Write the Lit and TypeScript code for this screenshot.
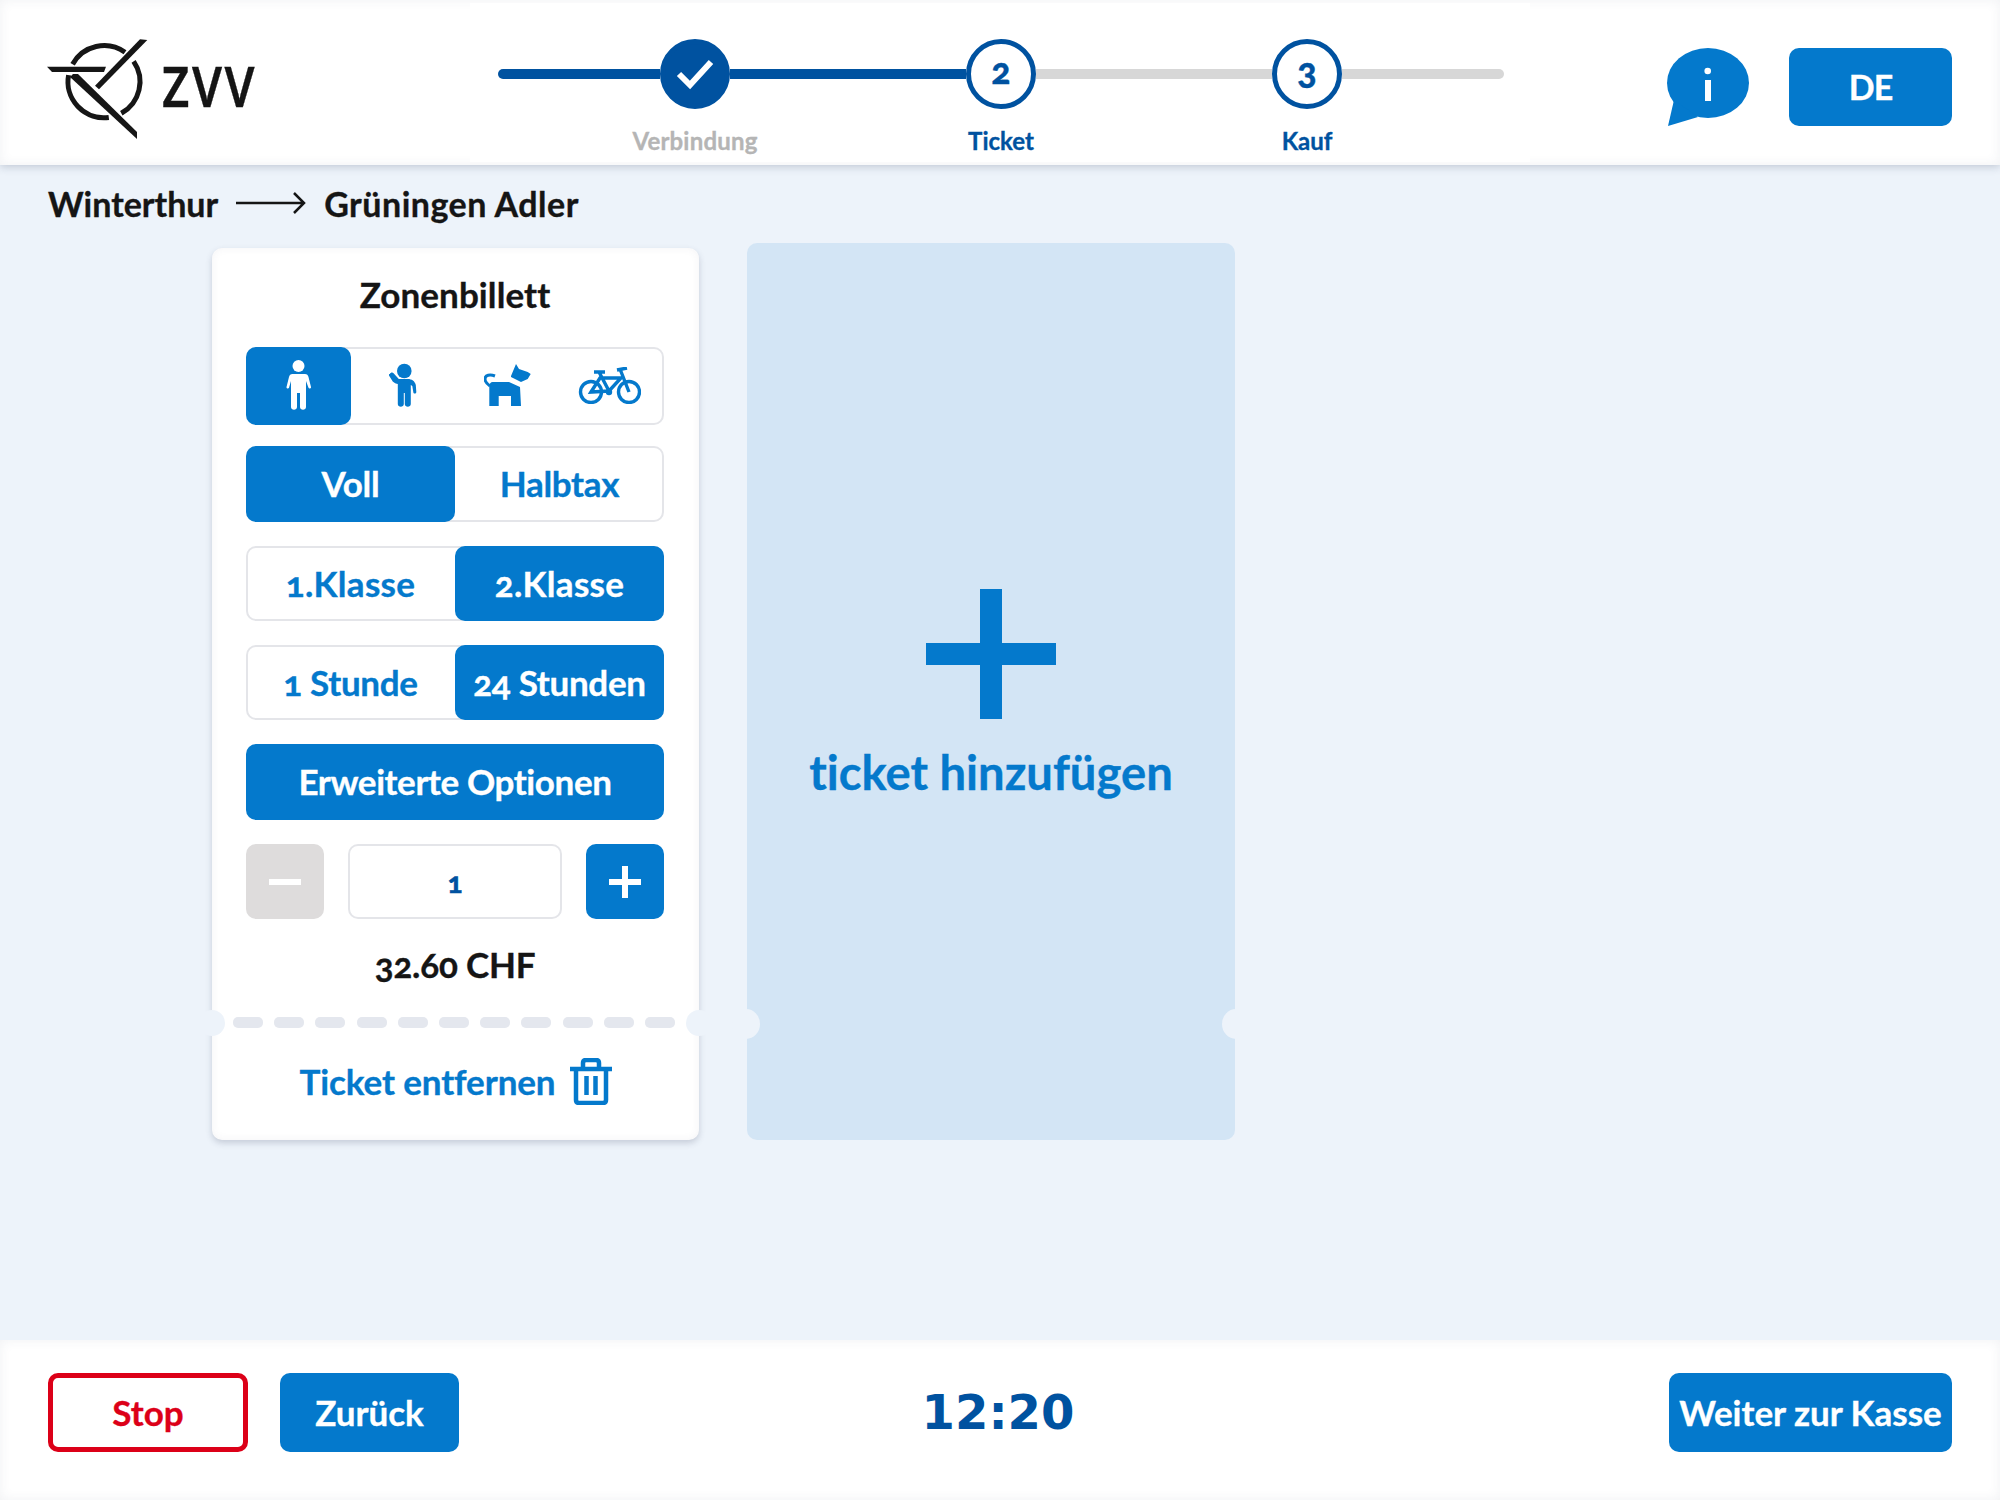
import { LitElement, css, html, svg } from 'lit';
import { customElement } from 'lit/decorators.js';

const personIcon = svg`<circle cx="12.500" cy="6" r="6"/><path d="M6 14h13c2 0 3 1 3.500 3l2.500 10c.3 1.400-1.900 2.200-2.500.8L20 21v26c0 3.500-6 3.500-6 0V33h-3v14c0 3.500-6 3.500-6 0V21l-2 6.800c-.6 1.400-2.800.6-2.500-.8l2.500-10c.5-2 1.500-3 3.500-3z"/>`;
const childIcon = svg`<circle cx="15.300" cy="8" r="7.300"/><path d="M.8 11c1-2 3-2 4-.5l5 5.500h9c4 0 7 2 8 6l.5 7c0 2-3 2-3 0l-1-6-1.500-1v19c0 3.500-6 3.500-6 0V30h-1v11c0 3.500-6 3.500-6 0V21c-3-.5-5-2-6-4l-2.500-4c-.5-.7-.5-1.300 0-2z"/>`;
const dogIcon = svg`<path d="M27 12L32 0l3 5 8.700 3 3 2-3 5-6.700 3-10-5z"/><path d="M8.700 18H25l11 5 1 19H27V32H14.700v10H5.300V22c0-2 1.400-4 3.400-4z"/><path d="M11 12C6 10 1 11 1 15c0 3 2 5 5 7" fill="none" stroke="currentColor" stroke-width="3"/>`;
const bikeIcon = svg`<g fill="none" stroke="currentColor" stroke-width="3.400"><circle cx="13" cy="25" r="10.500"/><circle cx="51" cy="25" r="10.500"/><path d="M13 25L22 11h21L31 24zM21 5l10 19M16 5h11M42 2l9 23M39 3l10-2"/></g><circle cx="31" cy="25" r="3.200"/>`;

const logoIcon = html`<svg class="logo-mark" viewBox="44 38 105 105" aria-hidden="true">
  <g fill="none" stroke="#161616" stroke-width="5">
    <path d="M72.600 64.200A36 36 0 0 1 125 52.200"/>
    <path d="M133.600 61.300A36 36 0 0 1 121.300 113.300"/>
    <path d="M108.800 117.400A36 36 0 0 1 68.600 75.100"/>
  </g>
  <g fill="#161616">
    <path d="M47 66.700h59l-2 5.300H52z"/>
    <path d="M140 39.300l7.300.7L99 89.300l-4-3.600z"/>
    <path d="M73 74h5l59 58v7L70 77z"/>
  </g>
</svg>`;

@customElement('app-root')
export class AppRoot extends LitElement {
  static override styles = css`
    :host {
      display: block;
      width: 2000px;
      height: 1500px;
      font-family: 'Lato', 'Noto Sans', sans-serif;
      font-weight: 700;
      font-feature-settings: 'onum';
      font-variant-ligatures: none;
      -webkit-text-stroke: 0.35px currentColor;
      color: #151515;
      background: #edf3fa;
    }

    .page {
      display: grid;
      grid-template-rows: 165px 1fr 160px;
      width: 2000px;
      height: 1500px;
    }

    /* header */
    .header {
      display: grid;
      grid-template-columns: 470px 1060px 470px;
      background: #fff;
      box-shadow: 0 2px 8px rgba(60, 70, 100, 0.24), inset 0 0 12px rgba(60, 70, 100, 0.07);
      z-index: 1;
    }

    .brand {
      display: flex;
      align-items: flex-start;
      padding: 38px 0 0 44px;
    }

    .logo-mark {
      width: 105px;
      height: 105px;
      flex: none;
    }

    .brand-name {
      margin: 16px 0 0 13px;
      font-family: 'Noto Sans', sans-serif;
      font-kerning: none;
      font-weight: 600;
      font-size: 56px;
      line-height: 62px;
      letter-spacing: 3px;
      transform: scaleX(0.85);
      transform-origin: left center;
    }

    .stepper {
      display: flex;
      align-items: flex-start;
      box-sizing: border-box;
      margin-top: 3px;
      height: 159px;
      padding: 36px 0 0 28px;
      background: #fff;
    }

    .bar {
      height: 10px;
      margin-top: 30px;
      background: #d7d7d7;
    }

    .bar.done {
      background: #0052a0;
    }

    .bar.start {
      border-radius: 5px 0 0 5px;
    }

    .bar.end {
      border-radius: 0 5px 5px 0;
    }

    .step {
      display: flex;
      flex-direction: column;
      align-items: center;
      width: 70px;
      flex: none;
    }

    .dot {
      display: flex;
      align-items: center;
      justify-content: center;
      box-sizing: border-box;
      width: 70px;
      height: 70px;
      padding-bottom: 9px;
      border: 5px solid #0052a0;
      border-radius: 50%;
      background: #fff;
      color: #0052a0;
      font-size: 36px;
      font-weight: 900;
    }

    .dot.done {
      padding-bottom: 0;
      background: #0052a0;
    }

    .dot svg {
      width: 42px;
      height: 34px;
    }

    .step-label {
      margin-top: 18px;
      font-size: 24px;
      line-height: 28px;
      white-space: nowrap;
      color: #0052a0;
    }

    .step-label.past {
      color: #b5b5b5;
      letter-spacing: 0.2px;
    }

    .tools {
      display: flex;
      align-items: flex-start;
      justify-content: flex-end;
      gap: 40px;
      padding: 48px 48px 0 0;
    }

    .bubble {
      width: 82px;
      height: 78px;
    }

    button {
      font: inherit;
      font-feature-settings: inherit;
      font-variant-ligatures: none;
      border: 0;
      padding: 0 0 2px;
      margin: 0;
      background: #0479cc;
      color: #fff;
      border-radius: 10px;
    }

    .lang {
      width: 163px;
      height: 78px;
      font-size: 34px;
      letter-spacing: -1px;
    }

    /* main */
    .route {
      display: flex;
      align-items: center;
      gap: 17px;
      height: 76px;
      padding-left: 48px;
      font-size: 34px;
    }

    .route .to {
      letter-spacing: 0.5px;
    }

    .route svg {
      width: 72px;
      height: 24px;
    }

    .tickets {
      display: flex;
      align-items: flex-start;
      gap: 48px;
      padding: 2px 0 0 212px;
    }

    .card {
      position: relative;
      width: 487px;
      margin-top: 5px;
      border-radius: 10px;
      background: #fff;
      box-shadow: 0 3px 6px rgba(60, 70, 100, 0.22), inset 0 0 8px rgba(60, 70, 100, 0.06);
    }

    .card-body {
      display: flex;
      flex-direction: column;
      gap: 24px;
      padding: 0 35px 30px 34px;
    }

    .title {
      height: 75px;
      display: flex;
      align-items: flex-end;
      justify-content: center;
      padding-bottom: 8px;
      box-sizing: border-box;
      font-size: 35px;
      letter-spacing: 0.1px;
    }

    .seg {
      display: grid;
      grid-auto-flow: column;
      grid-auto-columns: 1fr;
      height: 75px;
      border-radius: 10px;
      box-shadow: inset 0 0 0 2px #e4e5e9;
      color: #0479cc;
      font-size: 35px;
      letter-spacing: -0.3px;
    }

    .seg.icons {
      height: 78px;
      margin-bottom: -3px;
    }

    .seg.tall {
      height: 76px;
    }

    .seg.loose {
      letter-spacing: 0.3px;
    }

    .cell {
      display: flex;
      align-items: center;
      justify-content: center;
      box-sizing: border-box;
      padding-bottom: 2px;
      border-radius: 10px;
      white-space: nowrap;
    }

    .cell.on {
      background: #0479cc;
      color: #fff;
    }

    .cell svg {
      fill: currentColor;
    }

    .cell svg.bike {
      margin-right: 5px;
    }

    .wide {
      height: 76px;
      font-size: 35px;
      letter-spacing: -0.4px;
    }

    .qty {
      display: grid;
      grid-template-columns: 78px 1fr 78px;
      gap: 24px;
      height: 75px;
    }

    .qty button {
      display: flex;
      align-items: center;
      justify-content: center;
      padding: 0;
    }

    .qty button.off {
      background: #dedcdc;
    }

    .qty svg {
      width: 32px;
      height: 32px;
    }

    .qty-value {
      display: flex;
      align-items: center;
      justify-content: center;
      border-radius: 10px;
      box-shadow: inset 0 0 0 2px #e4e5e9;
      color: #0052a0;
      font-size: 28px;
      font-weight: 900;
    }

    .price {
      height: 44px;
      line-height: 42px;
      text-align: center;
      font-size: 35px;
      letter-spacing: -0.2px;
    }

    .tear {
      display: flex;
      gap: 11.200px;
      padding-left: 21px;
    }

    .tear span {
      width: 30px;
      height: 11px;
      border-radius: 5px;
      background: #e4e7ee;
    }

    .notch {
      position: absolute;
      width: 26px;
      height: 26px;
      border-radius: 50%;
      background: #edf3fa;
    }

    .card .notch {
      top: 762px;
    }

    .card .notch.left {
      left: -13px;
    }

    .card .notch.right {
      right: -13px;
    }

    .remove {
      display: flex;
      align-items: center;
      justify-content: center;
      gap: 14px;
      height: 112px;
      padding-bottom: 6px;
      box-sizing: border-box;
      color: #0479cc;
      font-size: 35px;
      letter-spacing: -0.1px;
    }

    .remove svg {
      width: 42px;
      height: 47px;
    }

    .slot {
      position: relative;
      display: flex;
      flex-direction: column;
      align-items: center;
      box-sizing: border-box;
      width: 488px;
      height: 897px;
      padding-top: 346px;
      border-radius: 10px;
      background: #d3e5f5;
      color: #0479cc;
      font-size: 47.200px;
    }

    .slot .notch {
      top: 766px;
      width: 28px;
      height: 30px;
    }

    .slot .notch.left {
      left: -15px;
    }

    .slot .notch.right {
      right: -15px;
    }

    .slot svg {
      width: 130px;
      height: 130px;
      margin-bottom: 24px;
    }

    /* footer */
    .footer {
      display: flex;
      align-items: flex-start;
      padding: 33px 48px 0;
      background: #fff;
      box-shadow: inset 0 0 12px rgba(60, 70, 100, 0.07);
      font-size: 35px;
      letter-spacing: -0.3px;
    }

    .footer button {
      height: 79px;
    }

    .stop {
      box-sizing: border-box;
      width: 200px;
      border: 5px solid #dc0018;
      background: #fff;
      color: #dc0018;
    }

    .back {
      width: 179px;
      margin-left: 32px;
    }

    .clock {
      width: 0;
      margin-left: 539px;
      display: flex;
      justify-content: center;
      height: 79px;
      line-height: 79px;
      font-family: 'DejaVu Sans', sans-serif;
      font-size: 48px;
      letter-spacing: 0;
      -webkit-text-stroke: 0;
      color: #0052a0;
    }

    .next {
      width: 283px;
      margin-left: auto;
    }
  `;

  override render() {
    return html`
      <div class="page">
        <header class="header">
          <div class="brand">${logoIcon}<span class="brand-name">ZVV</span></div>
          <div class="stepper">
            <div class="bar done start" style="width:162px"></div>
            <div class="step">
              <div class="dot done">
                <svg viewBox="0 0 42 34"><path d="M5 17l11 11L37 5" fill="none" stroke="#fff" stroke-width="6"/></svg>
              </div>
              <div class="step-label past">Verbindung</div>
            </div>
            <div class="bar done" style="width:236px"></div>
            <div class="step">
              <div class="dot">2</div>
              <div class="step-label">Ticket</div>
            </div>
            <div class="bar" style="width:236px"></div>
            <div class="step">
              <div class="dot">3</div>
              <div class="step-label">Kauf</div>
            </div>
            <div class="bar end" style="width:162px"></div>
          </div>
          <div class="tools">
            <svg class="bubble" viewBox="0 0 82 78">
              <ellipse cx="41" cy="35" rx="41" ry="35" fill="#0479cc"/>
              <path d="M7 52L1 78l30-9z" fill="#0479cc"/>
              <circle cx="40.700" cy="23" r="3.300" fill="#fff"/>
              <rect x="38" y="32" width="6" height="21" fill="#fff"/>
            </svg>
            <button class="lang">DE</button>
          </div>
        </header>

        <main>
          <div class="route">
            <span>Winterthur</span>
            <svg viewBox="0 0 72 24"><path d="M1 12h68M59 2l10 10-10 10" fill="none" stroke="#151515" stroke-width="2.500"/></svg>
            <span class="to">Grüningen Adler</span>
          </div>
          <div class="tickets">
            <section class="card">
              <div class="card-body">
                <div class="title">Zonenbillett</div>
                <div class="seg icons">
                  <div class="cell on"><svg width="25" height="50" viewBox="0 0 25 50">${personIcon}</svg></div>
                  <div class="cell"><svg width="28" height="45" viewBox="0 0 28 45">${childIcon}</svg></div>
                  <div class="cell"><svg width="47" height="42" viewBox="0 0 47 42">${dogIcon}</svg></div>
                  <div class="cell"><svg class="bike" width="63" height="37" viewBox="0 0 63 37">${bikeIcon}</svg></div>
                </div>
                <div class="seg tall">
                  <div class="cell on">Voll</div>
                  <div class="cell">Halbtax</div>
                </div>
                <div class="seg loose">
                  <div class="cell">1.Klasse</div>
                  <div class="cell on">2.Klasse</div>
                </div>
                <div class="seg">
                  <div class="cell">1 Stunde</div>
                  <div class="cell on">24 Stunden</div>
                </div>
                <button class="wide">Erweiterte Optionen</button>
                <div class="qty">
                  <button class="off"><svg viewBox="0 0 32 32"><rect y="13" width="32" height="6" fill="#fff"/></svg></button>
                  <div class="qty-value">1</div>
                  <button><svg viewBox="0 0 32 32"><path d="M0 13h13V0h6v13h13v6H19v13h-6V19H0z" fill="#fff"/></svg></button>
                </div>
                <div class="price">32.60 CHF</div>
              </div>
              <div class="tear">
                ${Array.from({ length: 11 }, () => html`<span></span>`)}
              </div>
              <div class="notch left"></div>
              <div class="notch right"></div>
              <div class="remove">
                <span>Ticket entfernen</span>
                <svg viewBox="0 0 42 47" fill="none" stroke="#0479cc" stroke-width="4.500">
                  <path d="M0 11h42M13 10V5c0-2 1-3 3-3h10c2 0 3 1 3 3v5M6 11v31c0 2 1 3 3 3h24c2 0 3-1 3-3V11M16.500 18v19M25.500 18v19"/>
                </svg>
              </div>
            </section>
            <section class="slot">
              <svg viewBox="0 0 130 130"><path d="M54 0h22v54h54v22H76v54H54V76H0V54h54z" fill="#0479cc"/></svg>
              <span>ticket hinzufügen</span>
              <div class="notch left"></div>
              <div class="notch right"></div>
            </section>
          </div>
        </main>

        <footer class="footer">
          <button class="stop">Stop</button>
          <button class="back">Zurück</button>
          <div class="clock">12:20</div>
          <button class="next">Weiter zur Kasse</button>
        </footer>
      </div>
    `;
  }
}
